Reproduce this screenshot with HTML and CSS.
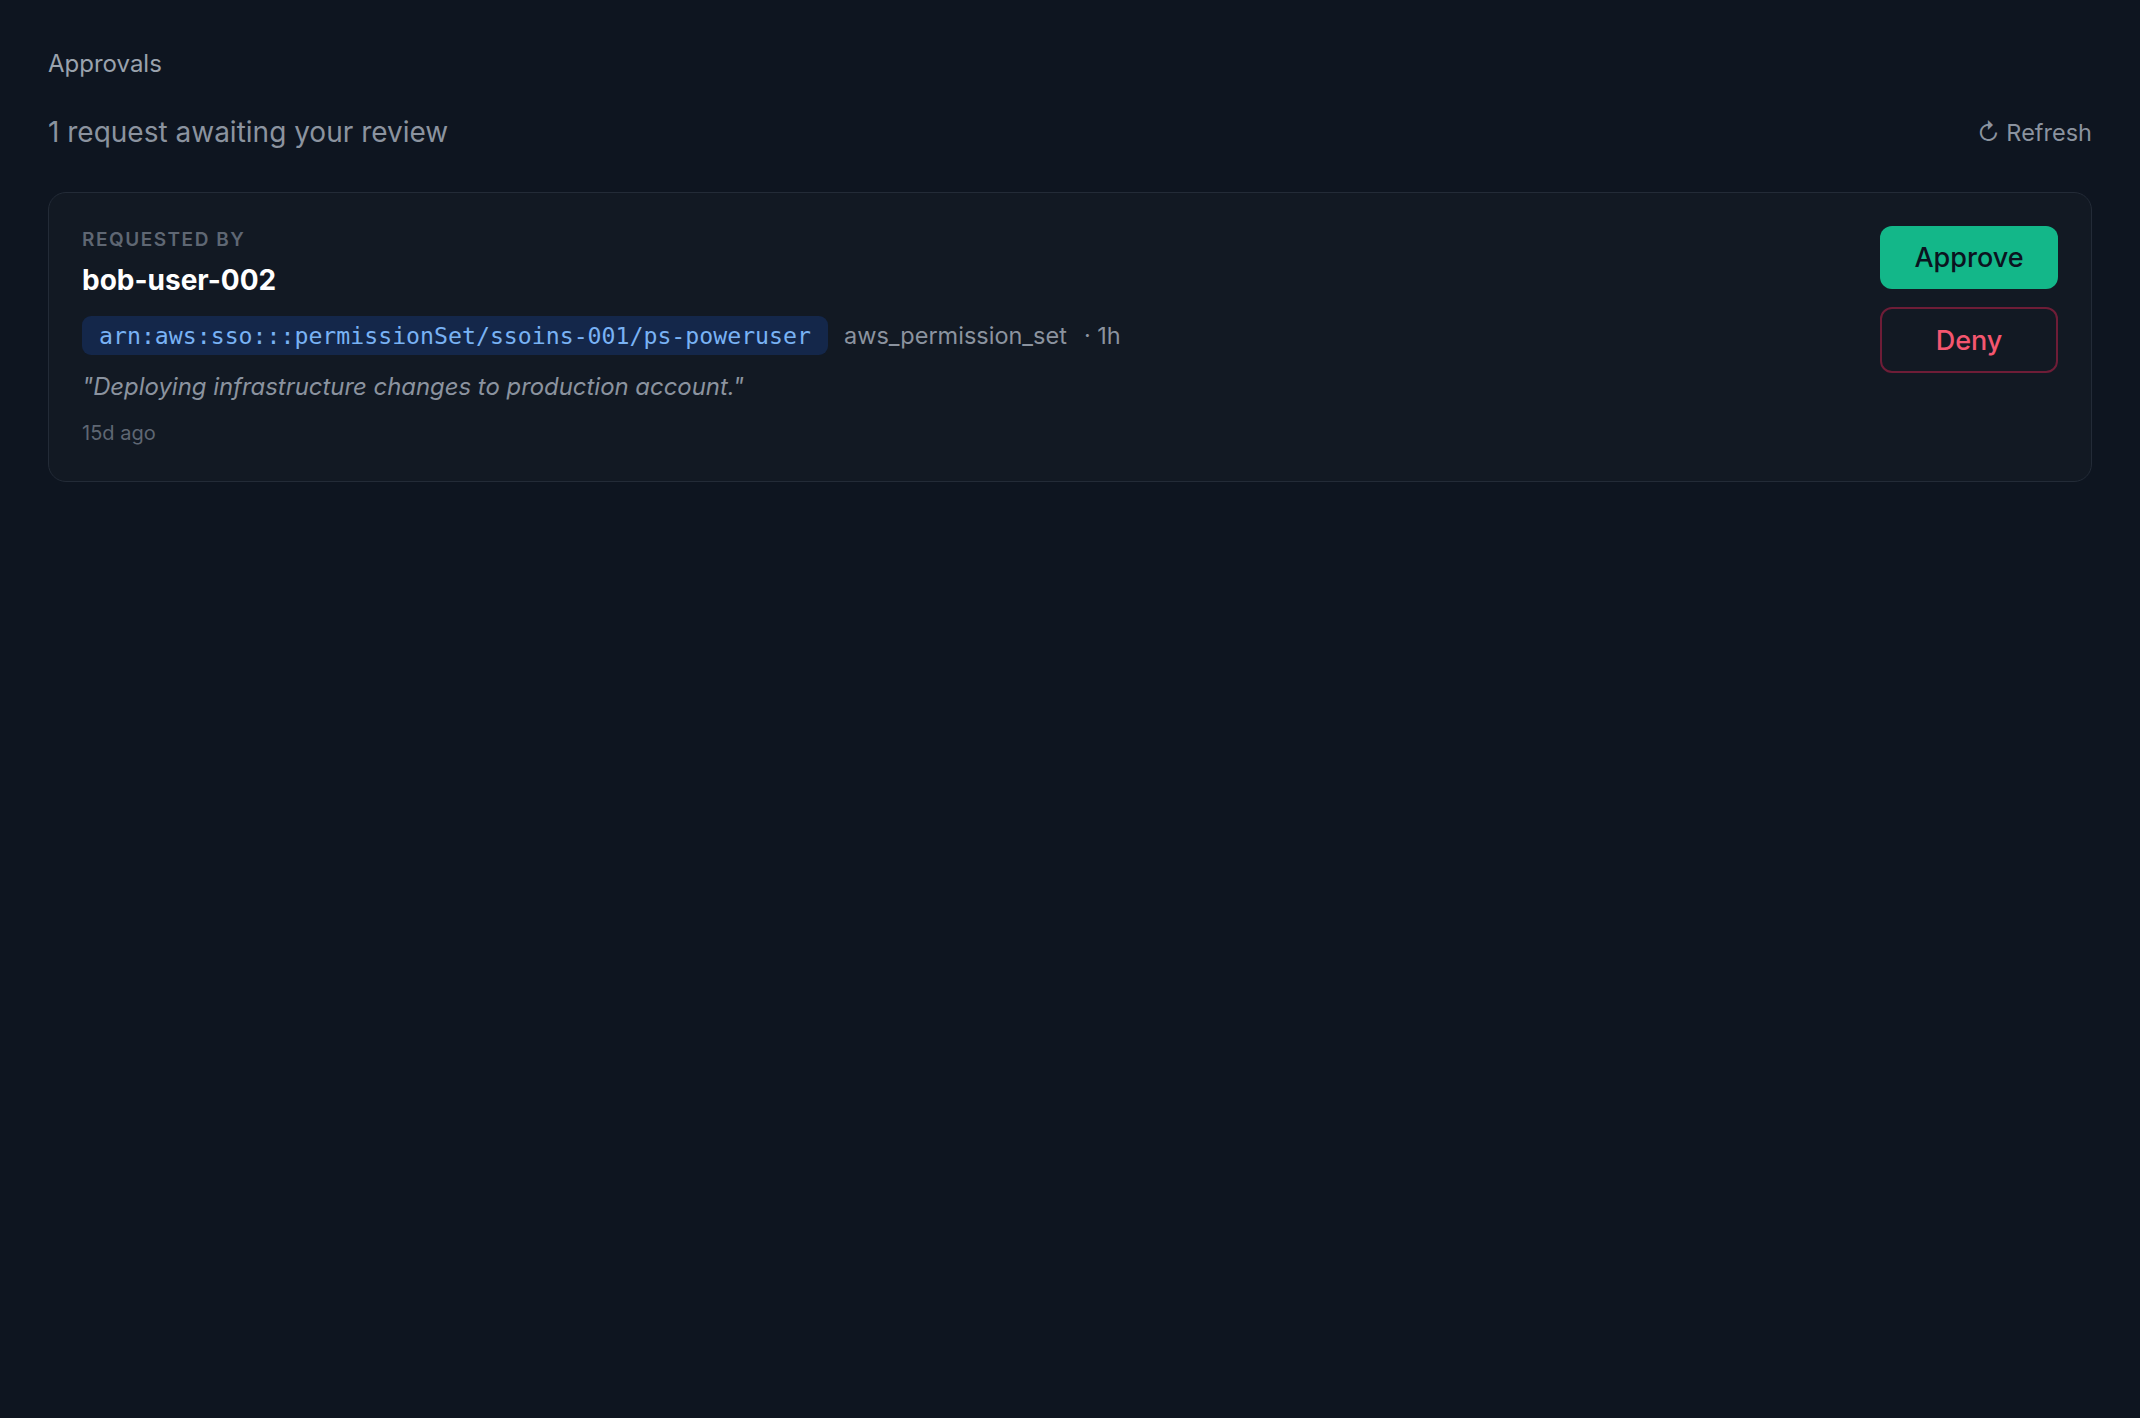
FILE: index.html
```html
<!DOCTYPE html>
<html lang="en">
<head>
    <meta charset="UTF-8">
    <meta name="viewport" content="width=device-width, initial-scale=1.0">
    <title>Approvals</title>
    <link rel="stylesheet" href="styles.css">
</head>
<body>
    <main class="page">
        <p class="crumb">Approvals</p>

        <!-- Titre + rafraichir -->
        <div class="page-head">
            <h1 class="page-title">1 request awaiting your review</h1>
            <button class="refresh-btn">↻ Refresh</button>
        </div>

        <!-- Demande en attente -->
        <div class="request-card">
            <div class="request-info">
                <div class="request-label">Requested by</div>
                <div class="request-user">bob-user-002</div>
                <div class="request-target">
                    <code class="arn-chip">arn:aws:sso:::permissionSet/ssoins-001/ps-poweruser</code>
                    <span class="target-type">aws_permission_set</span>
                    <span class="target-duration">· 1h</span>
                </div>
                <p class="request-reason">"Deploying infrastructure changes to production account."</p>
                <div class="request-age">15d ago</div>
            </div>
            <div class="request-actions">
                <button class="action-btn approve">Approve</button>
                <button class="action-btn deny">Deny</button>
            </div>
        </div>
    </main>
</body>
</html>
```

FILE: styles.css
```css
* {
    margin: 0;
    padding: 0;
    box-sizing: border-box;
}

html, body {
    min-height: 100vh;
    background: #0e1520;
    font-family: Inter, 'Noto Sans', sans-serif;
    color: #e5e7eb;
}

.page {
    padding: 47px 48px;
}

.crumb {
    font-size: 24px;
    line-height: 34px;
    color: #9aa2ad;
}

.page-head {
    display: flex;
    align-items: center;
    justify-content: space-between;
    margin-top: 31px;
}

.page-title {
    font-size: 28px;
    line-height: 40px;
    font-weight: 400;
    color: #8b939f;
}

.refresh-btn {
    border: none;
    background: none;
    font-family: inherit;
    font-size: 23.5px;
    color: #8b939f;
    cursor: pointer;
}

.request-card {
    display: flex;
    justify-content: space-between;
    align-items: flex-start;
    margin-top: 40px;
    padding: 33px 33px 34px 33px;
    background: #121923;
    border: 1.5px solid #232b37;
    border-radius: 18px;
}

.request-label {
    font-size: 19px;
    line-height: 27px;
    font-weight: 600;
    letter-spacing: 0.08em;
    text-transform: uppercase;
    color: #5f6773;
}

.request-user {
    margin-top: 9px;
    font-size: 28px;
    line-height: 36px;
    font-weight: 700;
    color: #ffffff;
}

.request-target {
    display: flex;
    align-items: center;
    gap: 16px;
    margin-top: 18px;
}

.arn-chip {
    padding: 0 17px;
    height: 39px;
    line-height: 39px;
    border-radius: 9px;
    background: #14274a;
    color: #79b2f4;
    font-family: 'DejaVu Sans Mono', 'Liberation Mono', monospace;
    font-size: 23.2px;
}

.target-type,
.target-duration {
    font-size: 23.5px;
    color: #8b939f;
}

.target-duration {
    margin-left: 1px;
}

.request-reason {
    margin-top: 14px;
    font-size: 23.9px;
    line-height: 36px;
    font-style: italic;
    color: #8b939f;
}

.request-age {
    margin-top: 15px;
    font-size: 20px;
    line-height: 27px;
    color: #5f6773;
}

.request-actions {
    display: flex;
    flex-direction: column;
    gap: 18px;
    width: 178px;
}

.action-btn {
    height: 63px;
    border-radius: 12px;
    font-family: inherit;
    font-size: 27px;
    font-weight: 500;
    cursor: pointer;
}

.action-btn.approve {
    border: none;
    background: #13b789;
    color: #0b1320;
}

.action-btn.deny {
    height: 66px;
    border: 2px solid #6e1d37;
    background: transparent;
    color: #f4566f;
}
```
